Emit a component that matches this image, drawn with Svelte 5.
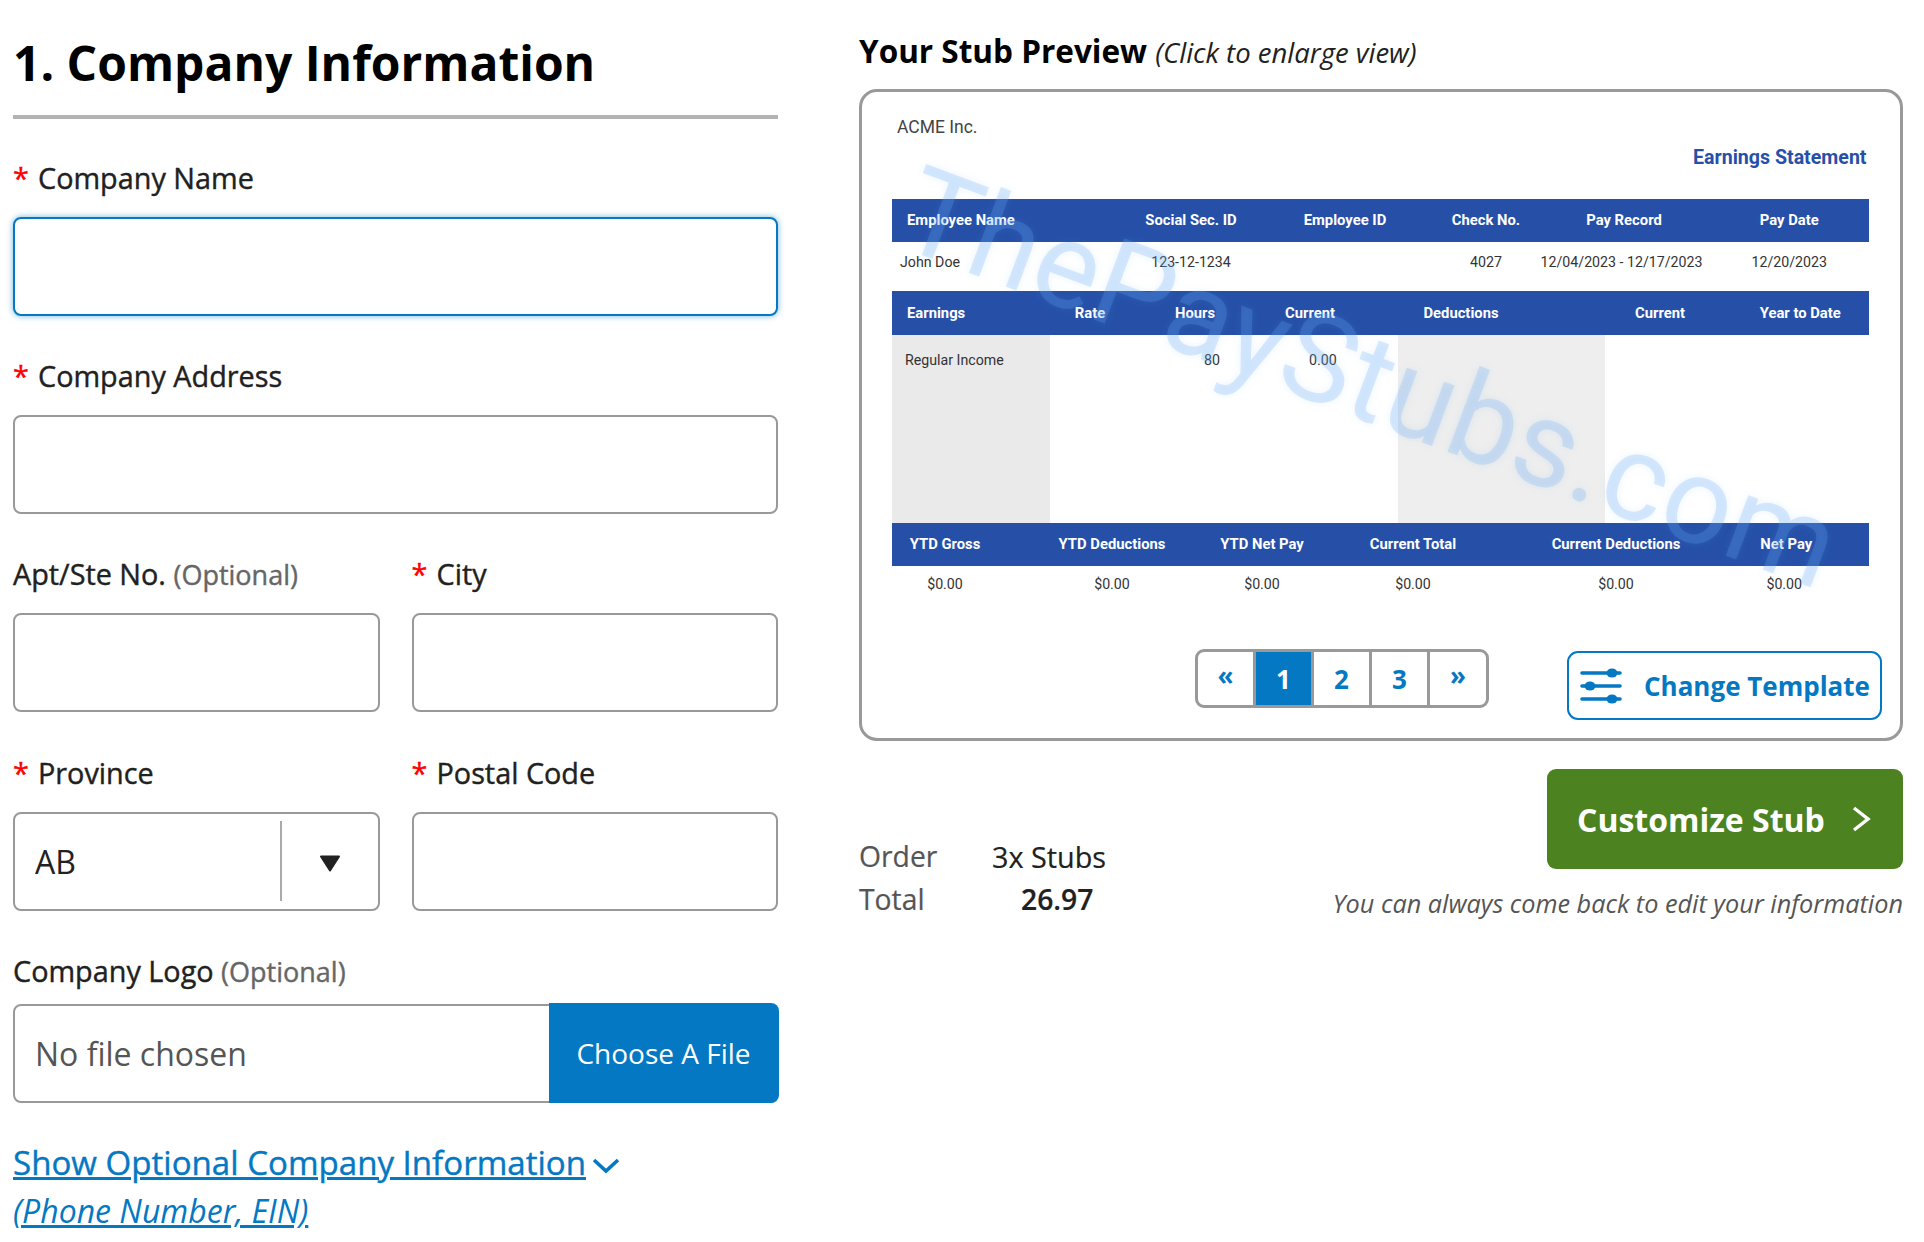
<script>
  const head1 = ['Employee Name', 'Social Sec. ID', 'Employee ID', 'Check No.', 'Pay Record', 'Pay Date'];
  const row1 = ['John Doe', '123-12-1234', '', '4027', '12/04/2023 - 12/17/2023', '12/20/2023'];
  const head2 = ['Earnings', 'Rate', 'Hours', 'Current', 'Deductions', 'Current', 'Year to Date'];
  const head3 = ['YTD Gross', 'YTD Deductions', 'YTD Net Pay', 'Current Total', 'Current Deductions', 'Net Pay'];
</script>

<div class="page">
  <section class="form">
    <h1>1. Company Information</h1>

    <div class="field">
      <label for="name"><span class="req">*</span>Company Name</label>
      <input id="name" class="focused" type="text" />
    </div>
    <div class="field">
      <label for="addr"><span class="req">*</span>Company Address</label>
      <input id="addr" type="text" />
    </div>
    <div class="two">
      <div class="field">
        <label for="apt">Apt/Ste No. <span class="opt">(Optional)</span></label>
        <input id="apt" type="text" />
      </div>
      <div class="field">
        <label for="city"><span class="req">*</span>City</label>
        <input id="city" type="text" />
      </div>
      <div class="field">
        <div class="label"><span class="req">*</span>Province</div>
        <div class="select">
          <span class="sel-value">AB</span>
          <span class="sel-arrow">
            <svg width="22" height="17" viewBox="0 0 22 17"><path d="M2 1.5h18L11 15.5z" fill="#212121" stroke="#212121" stroke-width="2" stroke-linejoin="round" /></svg>
          </span>
        </div>
      </div>
      <div class="field">
        <label for="postal"><span class="req">*</span>Postal Code</label>
        <input id="postal" type="text" />
      </div>
    </div>

    <div class="label logo-label">Company Logo <span class="opt">(Optional)</span></div>
    <div class="file">
      <span class="file-name">No file chosen</span>
      <span class="file-btn">Choose A File</span>
    </div>

    <div class="more">
      <a href="#more">Show Optional Company Information</a>
      <svg width="28" height="16" viewBox="0 0 28 16"><path d="M2 2l12 11L26 2" fill="none" stroke="#0478c2" stroke-width="3.6" /></svg>
    </div>
    <div class="more-sub"><a href="#more">(Phone Number, EIN)</a></div>
  </section>

  <section class="preview">
    <h2>Your Stub Preview <em>(Click to enlarge view)</em></h2>

    <div class="panel">
      <div class="stub">
        <div class="company">ACME Inc.</div>
        <div class="statement">Earnings Statement</div>

        <div class="bar cols1">
          {#each head1 as h}<span>{h}</span>{/each}
        </div>
        <div class="vals1 cols1">
          {#each row1 as v}<span>{v}</span>{/each}
        </div>

        <div class="bar cols2">
          {#each head2 as h}<span>{h}</span>{/each}
        </div>
        <div class="body">
          <div class="grey">Regular Income</div>
          <div class="mid"><span>80</span><span>0.00</span></div>
          <div class="grey grey2"></div>
          <div></div>
        </div>

        <div class="bar cols3">
          {#each head3 as h}<span>{h}</span>{/each}
        </div>
        <div class="vals3 cols3">
          {#each head3 as h}<span>$0.00</span>{/each}
        </div>
      </div>

      <div class="controls">
        <div class="pager">
          <span class="arrow">«</span>
          <span class="active">1</span>
          <span>2</span>
          <span>3</span>
          <span class="arrow">»</span>
        </div>
        <div class="change">
          <svg width="42" height="36" viewBox="0 0 42 36">
            <g stroke="#0478c2" stroke-width="3.6" stroke-linecap="round">
              <path d="M2 5h38M2 18h38M2 31h38" />
            </g>
            <g fill="#0478c2">
              <ellipse cx="32" cy="5" rx="5.5" ry="4.5" />
              <ellipse cx="10" cy="18" rx="5.5" ry="4.5" />
              <ellipse cx="32" cy="31" rx="5.5" ry="4.5" />
            </g>
          </svg>
          <span>Change Template</span>
        </div>
      </div>

      <div class="watermark">ThePayStubs.com</div>
    </div>

    <div class="bottom">
      <div class="order">
        <span class="k">Order</span><span class="v">3x Stubs</span>
        <span class="k">Total</span><span class="v total">26.97</span>
      </div>
      <div class="cta">
        <div class="customize">
          <span>Customize Stub</span>
          <svg width="20" height="26" viewBox="0 0 20 26"><path d="M3 2l14 11L3 24" fill="none" stroke="#fff" stroke-width="3.4" /></svg>
        </div>
        <div class="note">You can always come back to edit your information</div>
      </div>
    </div>
  </section>
</div>

<style>
  :global(body) {
    background: #fff;
  }
  .page {
    display: flex;
    gap: 81px;
    width: 1924px;
    height: 1242px;
    box-sizing: border-box;
    padding: 30px 0 0 13px;
    font-family: "Open Sans", sans-serif;
    color: #212121;
    overflow: hidden;
  }
  .form {
    width: 765px;
    flex: none;
  }
  h1 {
    margin: 3px 0 39px;
    padding-bottom: 22px;
    border-bottom: 4px solid #b3b3b3;
    font-size: 48px;
    line-height: 60px;
    font-weight: 700;
    color: #000;
  }
  .field {
    margin-bottom: 40.2px;
  }
  label,
  .label {
    display: block;
    font-size: 28.8px;
    line-height: 40px;
    font-weight: 500;
    -webkit-text-stroke: 0.4px;
    margin-bottom: 19px;
    white-space: nowrap;
  }
  .req {
    display: inline-block;
    width: 25px;
    line-height: 1;
    color: #f00;
  }
  .opt {
    font-size: 27px;
    line-height: 1;
    color: #666;
  }
  input,
  .select,
  .file {
    display: block;
    width: 100%;
    height: 99px;
    box-sizing: border-box;
    border: 2.5px solid #999;
    border-radius: 8px;
    background: #fff;
    outline: none;
  }
  input.focused {
    border-color: #0478c2;
    box-shadow: 0 0 6px rgba(4, 120, 194, 0.55);
  }
  .two {
    display: grid;
    grid-template-columns: 367px 366.5px;
    column-gap: 31.5px;
  }
  .select {
    display: flex;
    align-items: center;
  }
  .sel-value {
    flex: none;
    width: 265px;
    padding-left: 20px;
    box-sizing: border-box;
    font-size: 32px;
  }
  .sel-arrow {
    flex: 1;
    height: 80px;
    display: flex;
    align-items: center;
    justify-content: center;
    padding-top: 4px;
    box-sizing: border-box;
    border-left: 2px solid #aaa;
  }
  .logo-label {
    margin-bottom: 12.9px;
  }
  .file {
    display: flex;
    align-items: stretch;
  }
  .file-name {
    flex: 1;
    display: flex;
    align-items: center;
    padding-left: 20px;
    font-size: 32px;
    color: #555;
  }
  .file-btn {
    flex: none;
    width: 230px;
    margin: -2.5px -2.5px -2.5px 0;
    display: flex;
    align-items: center;
    justify-content: center;
    border-radius: 0 8px 8px 0;
    background: #0478c2;
    color: #fff;
    font-size: 28px;
  }
  .more {
    margin-top: 38px;
    display: flex;
    align-items: center;
    gap: 6px;
    font-size: 33.1px;
    line-height: 44px;
    font-weight: 500;
    -webkit-text-stroke: 0.4px;
  }
  .more svg {
    margin-top: 6px;
  }
  a {
    color: #0478c2;
    text-decoration: underline;
  }
  .more-sub {
    margin-top: 6px;
    font-size: 32px;
    line-height: 40px;
    font-style: italic;
  }

  .preview {
    width: 1044px;
    flex: none;
  }
  h2 {
    margin: -1px 0 13.5px;
    font-size: 31.5px;
    line-height: 44px;
    font-weight: 700;
    color: #000;
    white-space: nowrap;
  }
  h2 em {
    font-size: 27.5px;
    font-weight: 400;
    color: #212121;
  }
  .panel {
    position: relative;
    height: 652.5px;
    box-sizing: border-box;
    border: 3px solid #999;
    border-radius: 18px;
    padding: 0 18px 0 30px;
  }
  .stub {
    width: 976.5px;
    font-family: Roboto, sans-serif;
    font-size: 14.2px;
    color: #333;
  }
  .company {
    padding: 23px 0 0 5px;
    font-size: 17.5px;
    line-height: 24px;
    height: 47px;
    color: #444;
  }
  .statement {
    text-align: right;
    padding-right: 2px;
    font-size: 19.6px;
    font-weight: 700;
    line-height: 24px;
    color: #2650a8;
    height: 53px;
    margin-top: -16px;
  }
  .bar {
    display: grid;
    align-items: center;
    height: 43.5px;
    background: #2650a8;
    color: #fff;
    font-size: 14.8px;
    font-weight: 700;
    white-space: nowrap;
  }
  .bar span,
  .vals1 span,
  .vals3 span {
    justify-self: center;
  }
  .cols1 {
    grid-template-columns: 208px 182px 126px 156px 120px 1fr;
  }
  .cols1 span:last-child {
    padding-left: 26px;
  }
  .cols2 {
    grid-template-columns: 158px 80px 130px 100px 202px 196px 1fr;
  }
  .cols2 span:last-child {
    padding-right: 26px;
  }
  .cols3 {
    grid-template-columns: 128px 184px 116px 186px 220px 1fr;
  }
  .cols3 span:first-child,
  .cols3 span:last-child {
    padding-right: 22px;
  }
  .bar.cols1 span:first-child,
  .bar.cols2 span:first-child {
    justify-self: start;
    padding-left: 15px;
  }
  .vals1 {
    display: grid;
    align-items: center;
    height: 49px;
    padding-bottom: 10px;
    box-sizing: border-box;
    white-space: nowrap;
  }
  .vals1 span:first-child {
    justify-self: start;
    padding-left: 8px;
  }
  .vals1 span:nth-child(5) {
    padding-right: 5px;
  }
  .body {
    display: grid;
    grid-template-columns: 158px 348px 207px 1fr;
    height: 188px;
  }
  .grey {
    background: #eaeaea;
    padding: 15px 0 0 13px;
    line-height: 20px;
  }
  .grey2 {
    background: #eee;
  }
  .mid {
    display: flex;
    gap: 89px;
    padding: 15px 0 0 154px;
    line-height: 20px;
  }
  .vals3 {
    display: grid;
    align-items: center;
    height: 36px;
  }
  .vals3 span:last-child {
    padding-right: 26px;
  }

  .controls {
    display: flex;
    align-items: flex-start;
    margin-top: 47px;
  }
  .pager {
    display: flex;
    height: 59px;
    margin-left: 303px;
    box-sizing: border-box;
    border: 3px solid #999;
    border-radius: 9px;
    overflow: hidden;
    font-weight: 700;
    font-size: 26px;
    color: #0478c2;
  }
  .pager span {
    width: 58px;
    display: flex;
    align-items: center;
    justify-content: center;
    border-left: 3px solid #999;
    box-sizing: border-box;
  }
  .pager span:first-child {
    border-left: 0;
    width: 55px;
  }
  .pager span:last-child {
    width: 59px;
  }
  .pager .arrow {
    font-size: 26px;
    padding-bottom: 8px;
  }
  .pager .active {
    background: #0478c2;
    color: #fff;
  }
  .change {
    display: flex;
    align-items: center;
    gap: 22px;
    margin: 2px 0 0 auto;
    width: 315px;
    height: 69px;
    box-sizing: border-box;
    padding-left: 11px;
    border: 2.5px solid #0478c2;
    border-radius: 11px;
    color: #0478c2;
    font-size: 26px;
    font-weight: 700;
    white-space: nowrap;
  }
  .watermark {
    position: absolute;
    left: 68px;
    top: 53px;
    transform: rotate(20.5deg);
    transform-origin: left top;
    font-family: Roboto, sans-serif;
    font-size: 122px;
    line-height: 130px;
    color: rgba(100, 170, 245, 0.23);
    text-shadow: 0 0 8px rgba(100, 170, 245, 0.12);
    white-space: nowrap;
    pointer-events: none;
  }

  .bottom {
    display: flex;
    justify-content: space-between;
    align-items: flex-end;
    margin-top: 28px;
  }
  .order {
    display: grid;
    grid-template-columns: 133px auto;
    font-size: 28.3px;
    line-height: 43px;
    margin-bottom: 2.5px;
    -webkit-text-stroke: 0.2px;
  }
  .k {
    color: #555;
  }
  .v {
    font-size: 28.8px;
  }
  .total {
    padding-left: 29px;
    font-size: 28.3px;
    font-weight: 600;
  }
  .cta {
    display: flex;
    flex-direction: column;
    align-items: flex-end;
  }
  .customize {
    display: flex;
    align-items: center;
    gap: 26px;
    width: 356px;
    height: 100px;
    box-sizing: border-box;
    padding-left: 30px;
    border-radius: 9px;
    background: #4c8320;
    color: #fff;
    font-size: 32px;
    font-weight: 700;
  }
  .note {
    margin-top: 14px;
    font-size: 25.25px;
    line-height: 40px;
    font-style: italic;
    color: #555;
    white-space: nowrap;
  }
</style>
